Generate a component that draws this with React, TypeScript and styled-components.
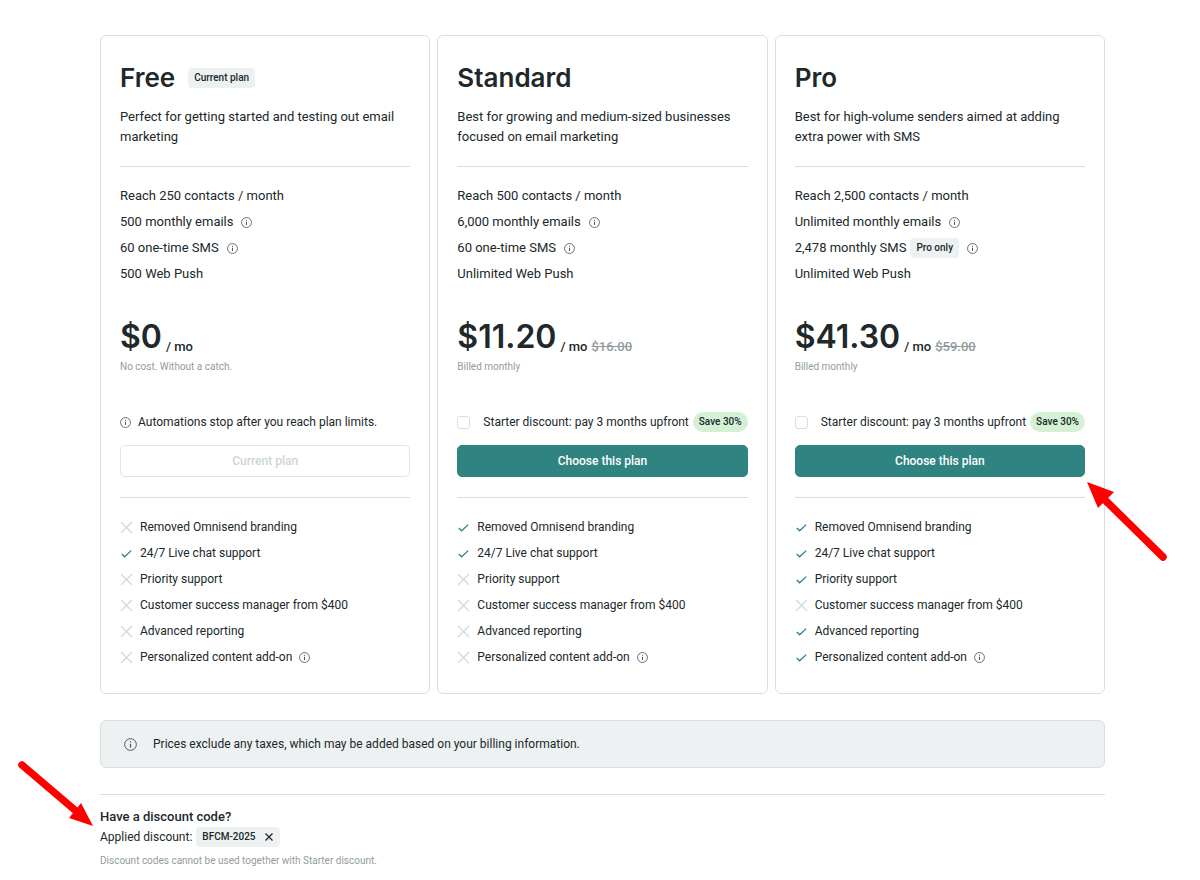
import React from "react";
import styled, { createGlobalStyle } from "styled-components";

const GlobalStyle = createGlobalStyle`
  *, *::before, *::after { box-sizing: border-box; }
  body {
    margin: 0;
    background: #fff;
    color: #20282a;
    font: 400 13px/20px Roboto, "Liberation Sans", sans-serif;
  }
  h2, h3, p, ul { margin: 0; padding: 0; }
  ul { list-style: none; }
`;

const Page = styled.main`
  padding: 35px 95px 12px 100px;
`;

const Plans = styled.div`
  display: grid;
  grid-template-columns: repeat(3, minmax(0, 1fr));
  gap: 7px;
`;

const Card = styled.section`
  border: 1px solid #d9dfe0;
  border-radius: 6px;
  padding: 28px 19px 23px;
`;

const TitleRow = styled.div`
  display: flex;
  align-items: center;
  gap: 13px;
  height: 28px;
`;

const Title = styled.h2`
  font: 600 26px/28px Inter, "Liberation Sans", sans-serif;
`;

const Tag = styled.span`
  display: inline-flex;
  align-items: center;
  gap: 8px;
  height: 20px;
  padding: 0 6px;
  border-radius: 4px;
  background: #edf1f2;
  font-size: 10px;
  font-weight: 500;
  white-space: nowrap;
`;

const Description = styled.p`
  min-height: 40px;
  margin-top: 15px;
`;

const Divider = styled.hr<{ $top: number; $bottom: number }>`
  height: 1px;
  border: 0;
  margin: ${(p) => p.$top}px 0 ${(p) => p.$bottom}px;
  background: #d9dfe0;
`;

const Limit = styled.li`
  display: flex;
  align-items: center;
  gap: 4px;
  height: 26px;
`;

const InfoButton = styled.button<{ $gap: number }>`
  display: flex;
  margin: 0 0 0 ${(p) => p.$gap}px;
  padding: 0;
  border: 0;
  background: none;
`;

const PriceRow = styled.div`
  display: flex;
  align-items: flex-end;
  gap: 4px;
  height: 40px;
  margin-top: 30px;
`;

const Amount = styled.strong`
  font: 600 32px/40px Inter, "Liberation Sans", sans-serif;
`;

const Period = styled.span`
  font-weight: 500;
`;

const OldPrice = styled.s`
  color: #929c9e;
  font-weight: 500;
`;

const Caption = styled.p`
  color: #929c9e;
  font-size: 10px;
  line-height: 20px;
`;

const OfferRow = styled.div`
  display: flex;
  align-items: center;
  height: 20px;
  margin: 35px 0 13px;
  font-size: 12px;
  white-space: nowrap;
`;

const OfferNote = styled.span`
  margin-left: 7px;
`;

const OfferLabel = styled.label`
  display: flex;
  align-items: center;
`;

const Checkbox = styled.input`
  appearance: none;
  width: 13px;
  height: 13px;
  margin: 0 13px 0 0;
  border: 1px solid #d9dfe0;
  border-radius: 3px;
  background: #fff;
  &:checked { background: #2f8381; }
`;

const SaveBadge = styled.span`
  height: 20px;
  margin-left: 4px;
  padding: 0 6px;
  border-radius: 10px;
  background: #d5f1d5;
  font-size: 10px;
  font-weight: 500;
`;

const ButtonWrap = styled.div`
  position: relative;
`;

const PlanButton = styled.button`
  display: block;
  width: 100%;
  height: 32px;
  border: 1px solid #2f8381;
  border-radius: 5px;
  background: #2f8381;
  color: #fff;
  font: 500 12px/20px Roboto, "Liberation Sans", sans-serif;
  &:disabled {
    border-color: #dfe5e6;
    background: #fff;
    color: #cdd5d7;
  }
`;

const Feature = styled.li`
  display: flex;
  align-items: center;
  gap: 7px;
  height: 26px;
  font-size: 12px;
`;

const Mark = styled.svg<{ $on: boolean }>`
  width: 13px;
  height: 13px;
  fill: none;
  stroke: ${(p) => (p.$on ? "#2f8381" : "#cdd5d7")};
`;

const Notice = styled.aside`
  display: flex;
  align-items: center;
  gap: 16px;
  height: 48px;
  margin-top: 26px;
  padding: 0 23px;
  border: 1px solid #d9dfe0;
  border-radius: 6px;
  background: #edf1f2;
  font-size: 12px;
`;

const DiscountSection = styled.section`
  position: relative;
`;

const DiscountTitle = styled.h3`
  font-size: 13px;
  font-weight: 500;
  line-height: 20px;
`;

const Applied = styled.div`
  display: flex;
  align-items: center;
  gap: 4px;
  height: 20px;
  margin-bottom: 4px;
  font-size: 12px;
`;

const RemoveButton = styled.button`
  display: flex;
  padding: 0;
  border: 0;
  background: none;
  color: inherit;
`;

const PlanArrow = styled.svg`
  position: absolute;
  top: 36px;
  left: 100%;
  pointer-events: none;
`;

const CodeArrow = styled.svg`
  position: absolute;
  top: -48px;
  left: -84px;
  pointer-events: none;
`;

function InfoIcon({ size = 11 }: { size?: number }) {
  return (
    <svg width={size} height={size} viewBox="0 0 12 12" fill="none" stroke="#4c5557" aria-hidden="true">
      <circle cx="6" cy="6" r="5.4" strokeWidth="0.9" />
      <path d="M6 5.2V8.8M6 3V4.2" strokeWidth="1.1" />
    </svg>
  );
}

function Info({ gap = 0 }: { gap?: number }) {
  return (
    <InfoButton type="button" aria-label="More information" $gap={gap}>
      <InfoIcon />
    </InfoButton>
  );
}

function FeatureMark({ on }: { on: boolean }) {
  return (
    <Mark $on={on} viewBox="0 0 13 13" role="img" aria-label={on ? "Included" : "Not included"}>
      {on ? <path d="M1.8 7 4.6 9.8 11.2 3.6" strokeWidth="1.3" /> : <path d="M1 1 12 12M12 1 1 12" strokeWidth="1.1" />}
    </Mark>
  );
}

type LimitItem = { text: string; tag?: string; info?: boolean };
type Plan = {
  name: string;
  current?: boolean;
  description: string;
  limits: LimitItem[];
  price: string;
  oldPrice?: string;
  caption: string;
  included: boolean[];
  highlighted?: boolean;
};

const FEATURES = [
  "Removed Omnisend branding",
  "24/7 Live chat support",
  "Priority support",
  "Customer success manager from $400",
  "Advanced reporting",
  "Personalized content add-on",
];

const PLANS: Plan[] = [
  {
    name: "Free",
    current: true,
    description: "Perfect for getting started and testing out email marketing",
    limits: [
      { text: "Reach 250 contacts / month" },
      { text: "500 monthly emails", info: true },
      { text: "60 one-time SMS", info: true },
      { text: "500 Web Push" },
    ],
    price: "$0",
    caption: "No cost. Without a catch.",
    included: [false, true, false, false, false, false],
  },
  {
    name: "Standard",
    description: "Best for growing and medium-sized businesses focused on email marketing",
    limits: [
      { text: "Reach 500 contacts / month" },
      { text: "6,000 monthly emails", info: true },
      { text: "60 one-time SMS", info: true },
      { text: "Unlimited Web Push" },
    ],
    price: "$11.20",
    oldPrice: "$16.00",
    caption: "Billed monthly",
    included: [true, true, false, false, false, false],
  },
  {
    name: "Pro",
    description: "Best for high-volume senders aimed at adding extra power with SMS",
    limits: [
      { text: "Reach 2,500 contacts / month" },
      { text: "Unlimited monthly emails", info: true },
      { text: "2,478 monthly SMS", tag: "Pro only", info: true },
      { text: "Unlimited Web Push" },
    ],
    price: "$41.30",
    oldPrice: "$59.00",
    caption: "Billed monthly",
    included: [true, true, true, false, true, true],
    highlighted: true,
  },
];

function PlanCard({ plan }: { plan: Plan }) {
  return (
    <Card>
      <TitleRow>
        <Title>{plan.name}</Title>
        {plan.current && <Tag>Current plan</Tag>}
      </TitleRow>
      <Description>{plan.description}</Description>
      <Divider $top={19} $bottom={16} />
      <ul>
        {plan.limits.map((l) => (
          <Limit key={l.text}>
            {l.text}
            {l.tag && <Tag>{l.tag}</Tag>}
            {l.info && <Info gap={4} />}
          </Limit>
        ))}
      </ul>
      <PriceRow>
        <Amount>{plan.price}</Amount>
        <Period>/ mo</Period>
        {plan.oldPrice && <OldPrice>{plan.oldPrice}</OldPrice>}
      </PriceRow>
      <Caption>{plan.caption}</Caption>
      <OfferRow>
        {plan.current ? (
          <>
            <InfoIcon />
            <OfferNote>Automations stop after you reach plan limits.</OfferNote>
          </>
        ) : (
          <>
            <OfferLabel>
              <Checkbox type="checkbox" />
              Starter discount: pay 3 months upfront
            </OfferLabel>
            <SaveBadge>Save 30%</SaveBadge>
          </>
        )}
      </OfferRow>
      <ButtonWrap>
        <PlanButton type="button" disabled={plan.current}>
          {plan.current ? "Current plan" : "Choose this plan"}
        </PlanButton>
        {plan.highlighted && (
          <PlanArrow width="84" height="84" viewBox="0 0 84 84" aria-hidden="true">
            <path d="M20 19 78 76" stroke="#f00" strokeWidth="7.5" strokeLinecap="round" />
            <path d="M2 1 29 11 13 27Z" fill="#f00" />
          </PlanArrow>
        )}
      </ButtonWrap>
      <Divider $top={20} $bottom={16} />
      <ul>
        {FEATURES.map((f, i) => (
          <Feature key={f}>
            <FeatureMark on={plan.included[i]} />
            <span>{f}</span>
            {i === FEATURES.length - 1 && <Info />}
          </Feature>
        ))}
      </ul>
    </Card>
  );
}

export default function App() {
  return (
    <Page>
      <GlobalStyle />
      <Plans>
        {PLANS.map((p) => (
          <PlanCard key={p.name} plan={p} />
        ))}
      </Plans>
      <Notice>
        <InfoIcon size={13} />
        <span>Prices exclude any taxes, which may be added based on your billing information.</span>
      </Notice>
      <Divider $top={26} $bottom={12} />
      <DiscountSection>
        <DiscountTitle>Have a discount code?</DiscountTitle>
        <Applied>
          <span>Applied discount:</span>
          <Tag>
            BFCM-2025
            <RemoveButton type="button" aria-label="Remove discount code">
              <svg width="10" height="10" viewBox="0 0 10 10" fill="none" stroke="currentColor" strokeWidth="1.3">
                <path d="M1.5 1.5 8.5 8.5M8.5 1.5 1.5 8.5" />
              </svg>
            </RemoveButton>
          </Tag>
        </Applied>
        <Caption>Discount codes cannot be used together with Starter discount.</Caption>
        <CodeArrow width="80" height="70" viewBox="0 0 80 70" aria-hidden="true">
          <path d="M6 6 60 52" stroke="#f00" strokeWidth="7.5" strokeLinecap="round" />
          <path d="M77 67 65 44 53 59Z" fill="#f00" />
        </CodeArrow>
      </DiscountSection>
    </Page>
  );
}
